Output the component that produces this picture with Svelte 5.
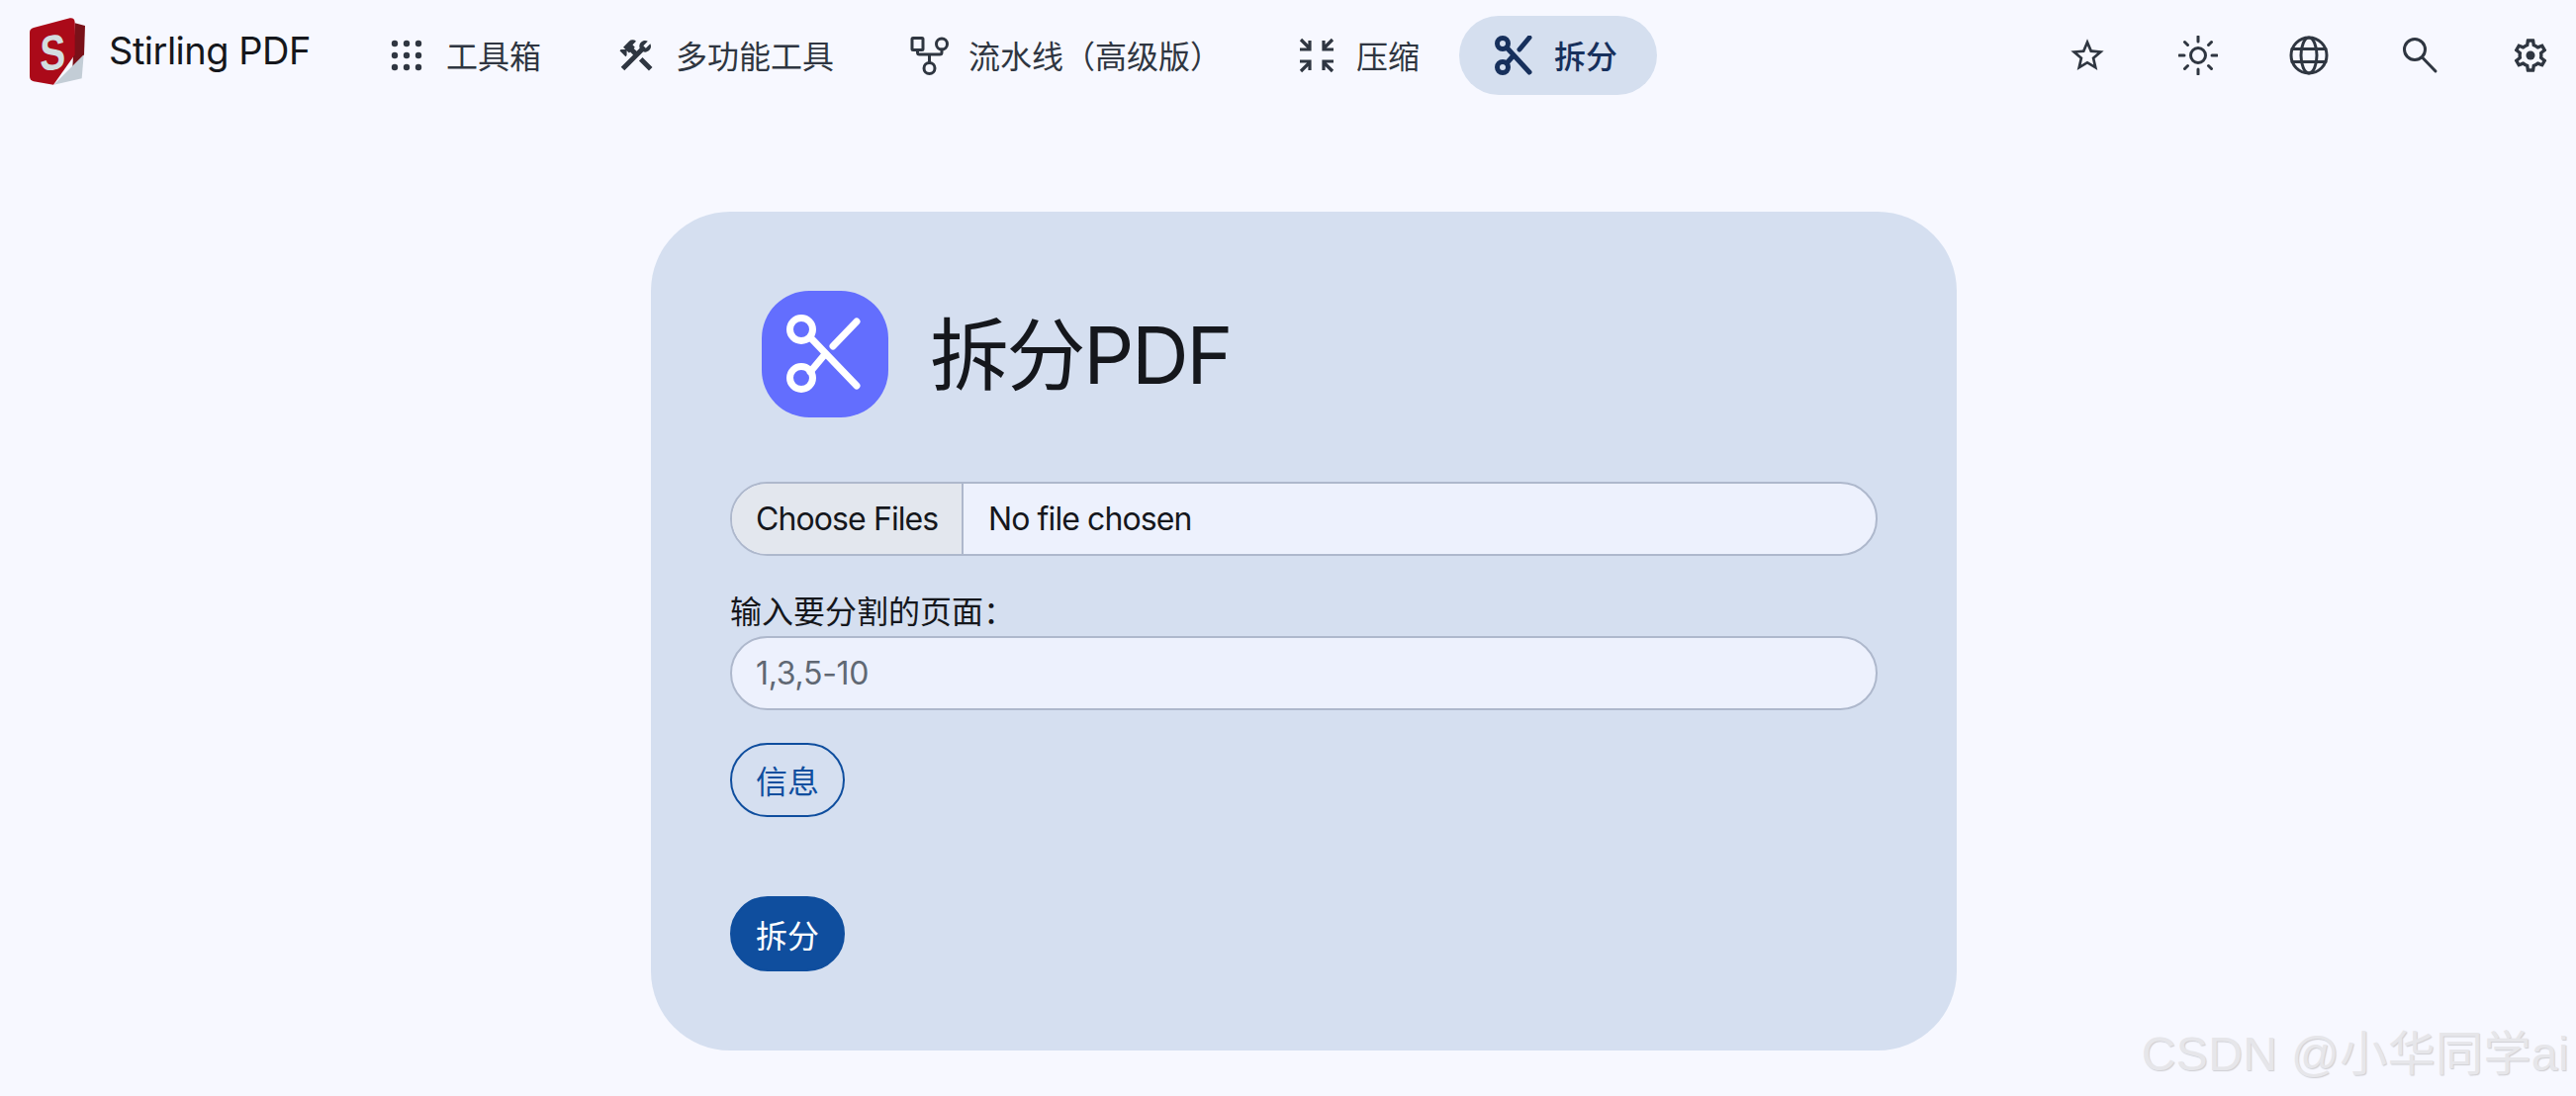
<script>
  let pages = $state('');
</script>

<div class="page">
  <nav class="navbar">
    <a class="brand" href="#home">
      <svg class="logo" viewBox="60 38 168 204" aria-hidden="true">
        <path d="M197 54 L228 62 L225 150 L190 190 Z" fill="#7a1119" />
        <path d="M224 150 L218 222 L133 241 Z" fill="#c3cdd6" />
        <path d="M72 68 L182 39 Q196 37 197 52 L197 150 L132 241 L72 231 Q60 228 60 215 L60 82 Q60 72 72 68 Z" fill="#ab0a19" />
        <text class="logo-s" transform="translate(91 199) skewY(-6) scale(0.78 1)">S</text>
      </svg>
      <span>Stirling PDF</span>
    </a>

    <ul class="nav-items">
      <li class="nav-item">
        <svg viewBox="0 0 40 40" aria-hidden="true">
          <g class="solid">
            <circle cx="8" cy="8" r="3.2" /><circle cx="20" cy="8" r="3.2" /><circle cx="32" cy="8" r="3.2" />
            <circle cx="8" cy="20" r="3.2" /><circle cx="20" cy="20" r="3.2" /><circle cx="32" cy="20" r="3.2" />
            <circle cx="8" cy="32" r="3.2" /><circle cx="20" cy="32" r="3.2" /><circle cx="32" cy="32" r="3.2" />
          </g>
        </svg>
        <span>工具箱</span>
      </li>
      <li class="nav-item">
        <svg viewBox="0 0 24 24" aria-hidden="true">
          <path class="solid" d="M13.78 15.3l6 6 2.11-2.16-6-6zM17.5 10c1.93 0 3.5-1.57 3.5-3.5 0-.58-.16-1.12-.41-1.6l-2.7 2.7-1.49-1.49 2.7-2.7c-.48-.25-1.02-.41-1.6-.41C15.57 3 14 4.57 14 6.5c0 .41.08.8.21 1.16l-1.85 1.85-1.78-1.78.71-.71-1.41-1.41L12 3.49a3 3 0 0 0-4.24 0L4.22 7.03l1.41 1.41H2.81l-.71.71 3.54 3.54.71-.71V9.15l1.41 1.41.71-.71 1.78 1.78-7.41 7.41 2.12 2.12L16.34 9.79c.36.13.75.21 1.16.21z" />
        </svg>
        <span>多功能工具</span>
      </li>
      <li class="nav-item">
        <svg viewBox="0 0 40 40" aria-hidden="true">
          <g class="line">
            <rect x="3" y="2.5" width="11" height="12" rx="1" />
            <circle cx="33" cy="8.5" r="5.5" />
            <circle cx="20.5" cy="33" r="5.5" />
            <path d="M8.5 14.500V17q0 2 2 2H31q2 0 2-2v-3M20.500 19v8.500" />
          </g>
        </svg>
        <span>流水线（高级版）</span>
      </li>
      <li class="nav-item">
        <svg viewBox="0 0 40 40" aria-hidden="true">
          <g class="line square">
            <path d="M4 4l9 9M13 5v9H3" />
            <path d="M36 4l-9 9M27 5v9h10" />
            <path d="M4 36l9-9M13 35v-9H3" />
            <path d="M36 36l-9-9M27 35v-9h10" />
          </g>
        </svg>
        <span>压缩</span>
      </li>
      <li class="nav-item active">
        <svg viewBox="0 0 40 40" aria-hidden="true">
          <g class="line thick">
            <circle cx="8" cy="8" r="5.500" />
            <circle cx="8" cy="32" r="5.500" />
            <path d="M12 12L35 37M12 28l7-8M25 14l10-12" />
          </g>
        </svg>
        <span>拆分</span>
      </li>
    </ul>

    <ul class="nav-icons">
      <li>
        <svg viewBox="0 0 24 24" aria-hidden="true">
          <path class="solid" d="M22 9.24l-7.19-.62L12 2 9.19 8.63 2 9.24l5.46 4.73L5.82 21 12 17.27 18.18 21l-1.63-7.03L22 9.24zM12 15.4l-3.76 2.27 1-4.28-3.32-2.88 4.38-.38L12 6.1l1.71 4.04 4.38.38-3.32 2.88 1 4.28L12 15.4z" />
        </svg>
      </li>
      <li>
        <svg viewBox="0 0 40 40" aria-hidden="true">
          <g class="line">
            <circle cx="20" cy="20" r="7.5" />
            <path d="M20 1v5M20 34v5M1 20h5M34 20h5M6.500 6.500l3 3M30.500 30.500l3 3M6.500 33.500l3-3M30.500 9.500l3-3" />
          </g>
        </svg>
      </li>
      <li>
        <svg viewBox="0 0 40 40" aria-hidden="true">
          <g class="line">
            <circle cx="20" cy="20" r="18" />
            <ellipse cx="20" cy="20" rx="8" ry="18" />
            <path d="M3 13.500h34M3 26.500h34" />
          </g>
        </svg>
      </li>
      <li>
        <svg viewBox="0 0 40 40" aria-hidden="true">
          <g class="line">
            <circle cx="15" cy="14" r="10.500" />
            <path d="M22.500 22L36 36" />
          </g>
        </svg>
      </li>
      <li>
        <svg viewBox="0 0 24 24" aria-hidden="true">
          <path class="solid" d="M19.43 12.98c.04-.32.07-.64.07-.98 0-.34-.03-.66-.07-.98l2.11-1.65c.19-.15.24-.42.12-.64l-2-3.46c-.09-.16-.26-.25-.44-.25-.06 0-.12.01-.17.03l-2.49 1c-.52-.4-1.08-.73-1.69-.98l-.38-2.65C14.46 2.18 14.25 2 14 2h-4c-.25 0-.46.18-.49.42l-.38 2.65c-.61.25-1.17.59-1.69.98l-2.49-1c-.06-.02-.12-.03-.18-.03-.17 0-.34.09-.43.25l-2 3.46c-.13.22-.07.49.12.64l2.11 1.65c-.04.32-.07.65-.07.98 0 .33.03.66.07.98l-2.11 1.65c-.19.15-.24.42-.12.64l2 3.46c.09.16.26.25.44.25.06 0 .12-.01.17-.03l2.49-1c.52.4 1.08.73 1.69.98l.38 2.65c.03.24.24.42.49.42h4c.25 0 .46-.18.49-.42l.38-2.65c.61-.25 1.17-.59 1.69-.98l2.49 1c.06.02.12.03.18.03.17 0 .34-.09.43-.25l2-3.46c.12-.22.07-.49-.12-.64l-2.11-1.65zm-1.98-1.71c.04.31.05.52.05.73 0 .21-.02.43-.05.73l-.14 1.13.89.7 1.08.84-.7 1.21-1.27-.51-1.04-.42-.9.68c-.43.32-.84.56-1.25.73l-1.06.43-.16 1.13-.2 1.35h-1.4l-.19-1.35-.16-1.13-1.06-.43c-.43-.18-.83-.41-1.23-.71l-.91-.7-1.06.43-1.27.51-.7-1.21 1.08-.84.89-.7-.14-1.13c-.03-.31-.05-.54-.05-.74s.02-.43.05-.73l.14-1.13-.89-.7-1.08-.84.7-1.21 1.27.51 1.04.42.9-.68c.43-.32.84-.56 1.25-.73l1.06-.43.16-1.13.2-1.35h1.39l.19 1.35.16 1.13 1.06.43c.43.18.83.41 1.23.71l.91.7 1.06-.43 1.27-.51.7 1.21-1.07.85-.89.7.14 1.13z" />
          <circle class="solid" cx="12" cy="12" r="2.7" />
        </svg>
      </li>
    </ul>
  </nav>

  <main class="card">
    <header class="card-head">
      <div class="tool-icon">
        <svg viewBox="0 0 128 128" aria-hidden="true">
          <g class="scissors">
            <circle cx="40" cy="39" r="11.500" />
            <circle cx="40" cy="88" r="11.500" />
            <path d="M49 47L96 96M49 82L64 64M72 56L96 31" />
          </g>
        </svg>
      </div>
      <h1>拆分PDF</h1>
    </header>

    <label class="file-field">
      <span class="file-btn">Choose Files</span>
      <span class="file-name">No file chosen</span>
    </label>

    <label class="pages-label" for="pages">输入要分割的页面：</label>
    <input id="pages" class="text-input" type="text" placeholder="1,3,5-10" bind:value={pages} />

    <button class="btn btn-outline" type="button">信息</button>
    <button class="btn btn-primary" type="button">拆分</button>
  </main>

  <div class="watermark">CSDN @小华同学ai</div>
</div>

<style>
  :global(body) {
    background: #f7f8ff;
    font-family: Inter, "Noto Sans CJK SC", sans-serif;
    color: #15171c;
  }

  .page {
    position: relative;
    height: 1108px;
    overflow: hidden;
  }

  .navbar {
    display: flex;
    align-items: center;
    height: 80px;
    padding: 16px 26px 16px 30px;
  }

  .brand {
    display: flex;
    align-items: center;
    gap: 24px;
    color: #15171c;
    text-decoration: none;
    font-size: 38px;
    letter-spacing: -0.5px;
    width: 323px;
    margin-top: -8px;
    white-space: nowrap;
  }

  .brand span {
    margin-top: -2px;
  }

  .logo {
    width: 56px;
    height: 68px;
    flex: none;
  }

  .logo-s {
    font-family: "Liberation Sans", sans-serif;
    font-weight: 700;
    font-size: 150px;
    fill: #d3dde0;
  }

  .nav-items,
  .nav-icons {
    display: flex;
    align-items: center;
    list-style: none;
    margin: 0;
    padding: 0;
  }

  .nav-item {
    display: flex;
    align-items: center;
    gap: 20px;
    height: 80px;
    padding: 0 38px;
    border-radius: 40px;
    font-size: 32px;
    color: #2f3641;
    white-space: nowrap;
  }

  .nav-item span {
    margin-top: -2px;
  }

  .nav-item svg {
    width: 40px;
    height: 40px;
    flex: none;
  }

  .nav-item.active {
    background: #d5dfef;
    color: #17305c;
    font-weight: 500;
    padding: 0 40px 0 36px;
    margin-left: 2px;
  }

  .nav-icons {
    margin-left: auto;
    gap: 72px;
  }

  .nav-icons li {
    display: flex;
  }

  .nav-icons svg {
    width: 40px;
    height: 40px;
  }

  .solid {
    fill: #2f3641;
  }

  .line {
    fill: none;
    stroke: #2f3641;
    stroke-width: 3;
    stroke-linecap: round;
    stroke-linejoin: round;
  }

  .line.square {
    stroke-width: 3.200;
    stroke-linecap: butt;
    stroke-linejoin: miter;
  }

  .line.thick {
    stroke: #17305c;
    stroke-width: 5;
  }

  .card {
    display: flex;
    flex-direction: column;
    align-items: flex-start;
    box-sizing: border-box;
    width: 1320px;
    height: 848px;
    margin: 102px 0 0 658px;
    padding: 80px;
    background: #d5dff0;
    border-radius: 80px;
  }

  .card-head {
    display: flex;
    align-items: center;
    gap: 42px;
    margin: 0 0 65px 32px;
  }

  .tool-icon {
    width: 128px;
    height: 128px;
    border-radius: 48px;
    background: #636efe;
  }

  .tool-icon svg {
    display: block;
    width: 128px;
    height: 128px;
  }

  .scissors {
    fill: none;
    stroke: #fff;
    stroke-width: 7;
    stroke-linecap: round;
  }

  h1 {
    margin: 2px 0 0;
    font-size: 80px;
    font-weight: 400;
    letter-spacing: -2.4px;
    line-height: 96px;
    color: #15171c;
  }

  .file-field {
    display: flex;
    align-items: stretch;
    box-sizing: border-box;
    width: 1160px;
    height: 75px;
    border: 2px solid #aeb8cc;
    border-radius: 38px;
    background: #edf1fd;
    font-size: 32px;
    letter-spacing: -0.9px;
    overflow: hidden;
  }

  .file-btn {
    display: flex;
    align-items: center;
    padding: 0 24px;
    width: 234px;
    box-sizing: border-box;
    background: #e3e7ee;
    border-right: 2px solid #aeb8cc;
    white-space: nowrap;
  }

  .file-name {
    display: flex;
    align-items: center;
    padding-left: 25px;
  }

  .pages-label {
    margin-top: 33px;
    font-size: 32px;
    line-height: 48px;
  }

  .text-input {
    box-sizing: border-box;
    width: 1160px;
    height: 75px;
    padding: 0 24px;
    border: 2px solid #aeb8cc;
    border-radius: 38px;
    background: #edf1fd;
    font: inherit;
    font-size: 32px;
    letter-spacing: -0.3px;
    color: #15171c;
    outline: none;
  }

  .text-input::placeholder {
    color: #606873;
    opacity: 1;
  }

  .btn {
    box-sizing: border-box;
    width: 116px;
    height: 76px;
    padding: 0;
    border-radius: 38px;
    font: inherit;
    font-size: 32px;
  }

  .btn-outline {
    margin-top: 33px;
    background: transparent;
    border: 2px solid #0f4e9e;
    color: #0f4e9e;
  }

  .btn-primary {
    margin-top: 80px;
    background: #0f4e9e;
    border: 2px solid #0f4e9e;
    color: #fff;
  }

  .watermark {
    position: absolute;
    right: 7px;
    bottom: 12px;
    font-family: "Liberation Sans", "Noto Sans CJK SC", sans-serif;
    font-size: 48px;
    line-height: 60px;
    letter-spacing: 0.4px;
    color: #e6e6ea;
    text-shadow: 1px 1px 1px #cfcfd4;
    white-space: nowrap;
  }
</style>
